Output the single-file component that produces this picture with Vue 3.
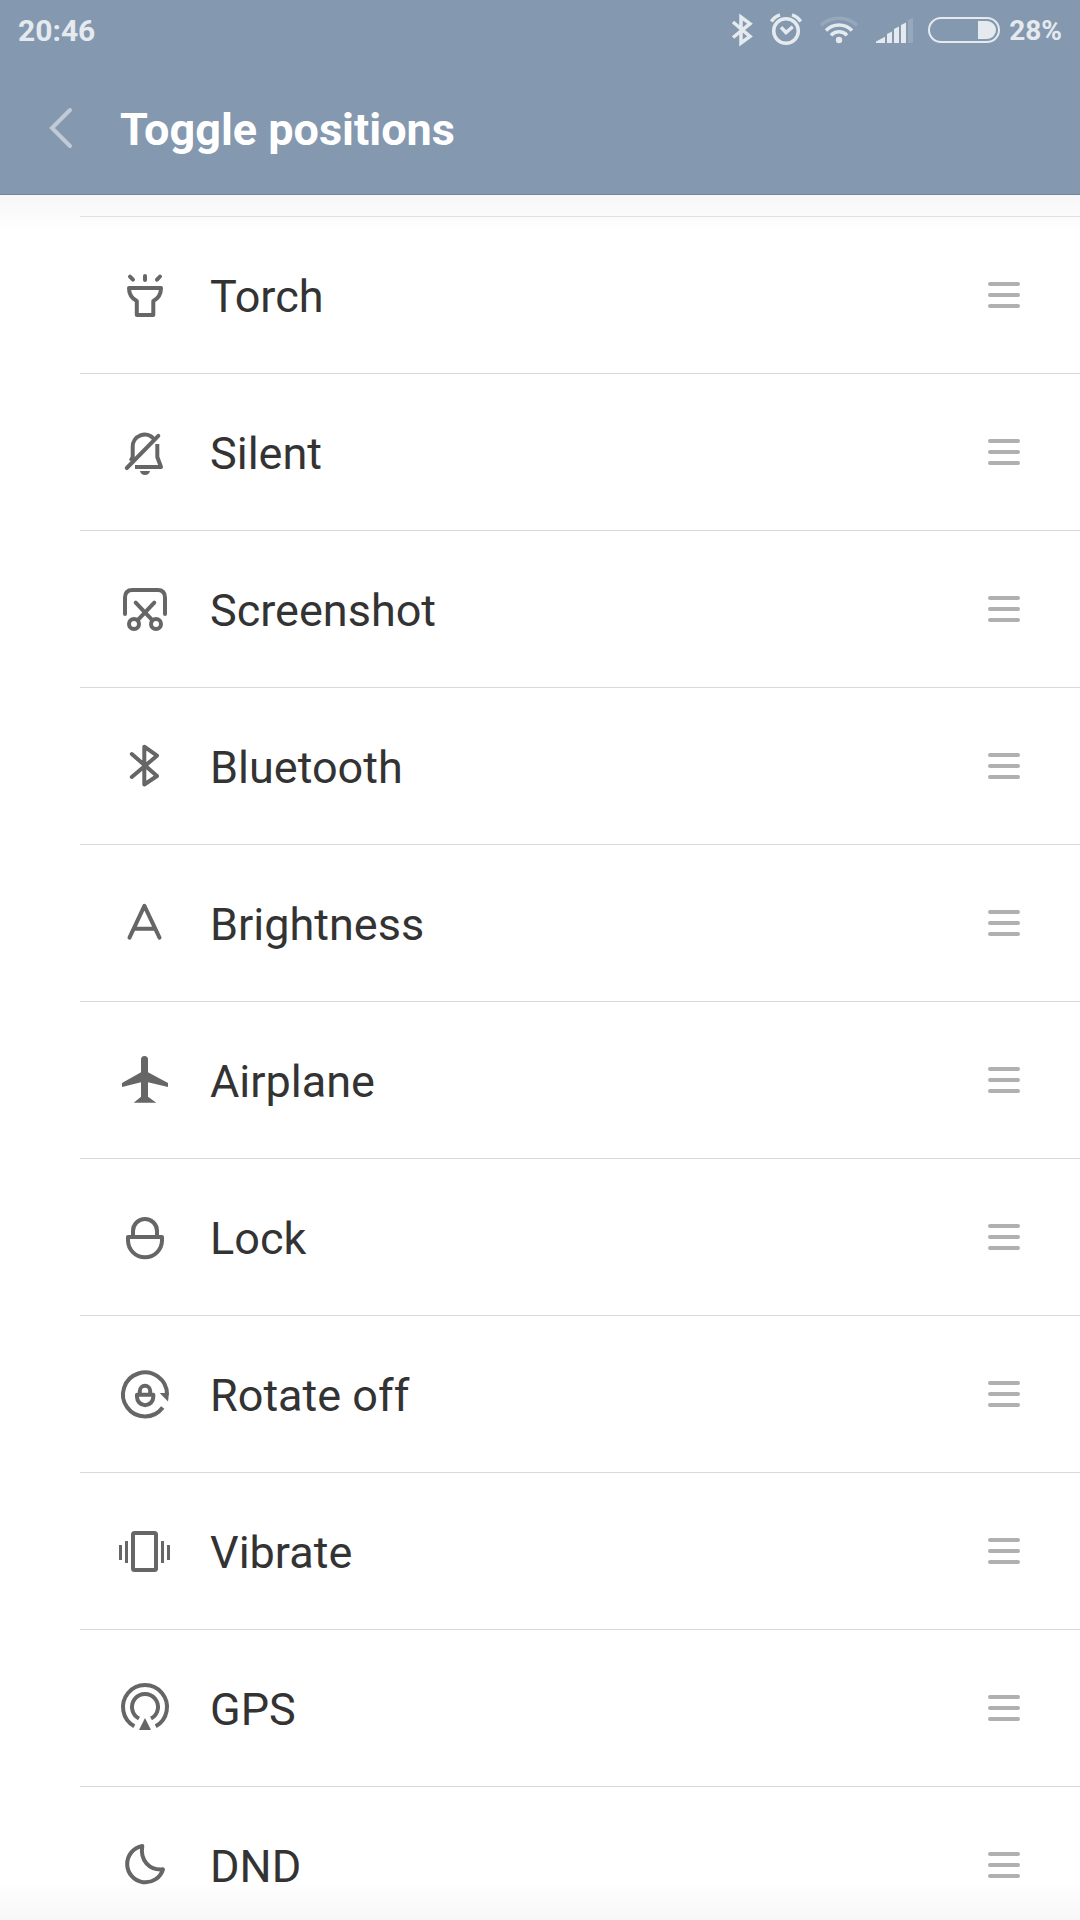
<script setup>
import { ref } from 'vue'

const toggles = ref([
  { id: 'torch', label: 'Torch' },
  { id: 'silent', label: 'Silent' },
  { id: 'screenshot', label: 'Screenshot' },
  { id: 'bluetooth', label: 'Bluetooth' },
  { id: 'brightness', label: 'Brightness' },
  { id: 'airplane', label: 'Airplane' },
  { id: 'lock', label: 'Lock' },
  { id: 'rotate', label: 'Rotate off' },
  { id: 'vibrate', label: 'Vibrate' },
  { id: 'gps', label: 'GPS' },
  { id: 'dnd', label: 'DND' },
])
</script>

<template>
  <div class="screen">
    <header class="header">
      <div class="status">
        <time class="clock">20:46</time>
        <div class="indicators">
          <svg class="bt" width="24" height="36" viewBox="0 0 24 36" aria-hidden="true">
            <path d="M3 10L20 24.3 11 31V5L20 11.7 3 25.5" class="line" />
          </svg>
          <svg class="alarm" width="36" height="36" viewBox="0 0 36 36" aria-hidden="true">
            <circle cx="18" cy="19" r="12.3" class="line" />
            <path d="M13 15.3L18 20.5 24.7 14.7M3.3 9.5Q6.5 4.5 12 2.8M32.7 9.5Q29.5 4.5 24 2.8" class="line" />
          </svg>
          <svg class="wifi" width="40" height="36" viewBox="0 0 40 36" aria-hidden="true">
            <path d="M2 13.3A26.6 26.6 0 0 1 38 13.3" class="line faint" />
            <path d="M7 18.5A18 18 0 0 1 33 18.5M12 23.3A10.7 10.7 0 0 1 28 23.3" class="line" />
            <circle cx="20" cy="28" r="3.2" class="solid" />
          </svg>
          <svg class="signal" width="38" height="36" viewBox="0 0 38 36" aria-hidden="true">
            <path d="M0 31V29.5L9 24.7V31ZM11 31V22L16 19.5V31ZM18 31V17L23 14.6V31ZM25 31V13L30 10.5V31Z" class="solid" />
            <path d="M32 31V8L37 5.7V31Z" class="solid faint" />
          </svg>
          <svg class="battery" width="72" height="26" viewBox="0 0 72 26" aria-hidden="true">
            <rect x="1" y="1" width="70" height="24" rx="12" class="outline" />
            <path d="M50 4H59A9 9 0 0 1 59 22H50Z" class="solid" />
          </svg>
          <span class="percent">28%</span>
        </div>
      </div>
      <div class="title-bar">
        <button class="back" type="button" aria-label="Back">
          <svg width="24" height="44" viewBox="0 0 24 44" aria-hidden="true">
            <path d="M21 4L3 22 21 40" />
          </svg>
        </button>
        <h1>Toggle positions</h1>
      </div>
    </header>

    <main class="body">
      <ul class="list">
        <li v-for="t in toggles" :key="t.id" class="row">
          <svg class="icon" width="64" height="64" viewBox="0 0 64 64" aria-hidden="true">
            <g v-if="t.id === 'torch'">
              <path d="M17 13.7L20 16.7M32 13V17M47 13.5L44 16.7" />
              <path d="M16 25H48C48 31 45 35.5 40.3 38V52H23.8V38C19 35.5 16 31 16 25Z" />
            </g>
            <g v-else-if="t.id === 'silent'">
              <path d="M13.8 48L45.3 15.8" />
              <path d="M17.7 41L19.7 37V27A12 12 0 0 1 41 19" class="butt" />
              <path d="M44.3 24V37L48 47H22" class="butt" />
              <path d="M27 51H37Q36 55 32 55Q28 55 27 51Z" class="fill" />
            </g>
            <g v-else-if="t.id === 'screenshot'">
              <path d="M12 37V20.5Q12 13 19.5 13H44.5Q52 13 52 20.5V37" />
              <circle cx="21" cy="47" r="5" />
              <circle cx="43" cy="47" r="5" />
              <path d="M22.7 25.7L39.5 43.3M41.3 25.7L24.5 43.3" />
            </g>
            <path v-else-if="t.id === 'bluetooth'" d="M18.8 20L44 42 31.3 50.5V12.7L44 21.7 18.8 43" />
            <path v-else-if="t.id === 'brightness'" d="M16.5 46.7L31.4 14.8 46.5 46.7M21 37.7H42" />
            <path
              v-else-if="t.id === 'airplane'"
              class="fill"
              d="M28 11.5A3.5 3.5 0 0 1 35 11.5V24.3L55 35V39L35 34.3V48.7L43.3 54.7H20.7L28 48.7V34.3L9 39V35L28 24.3Z"
            />
            <g v-else-if="t.id === 'lock'">
              <path d="M20 32V26A12 12 0 0 1 44 26V32" />
              <path d="M15 32H49V35.3A17 17 0 0 1 15 35.3Z" />
            </g>
            <g v-else-if="t.id === 'rotate'">
              <path d="M49.7 45.5A22 22 0 1 1 54 32.5" class="butt" />
              <path d="M46.7 31H56L55 39.5Z" class="fill" />
              <path d="M26.8 32.5V29A5.2 5.2 0 0 1 37.2 29V32.5M24 32.7H40.3V35A8.1 8.1 0 0 1 24 35Z" />
            </g>
            <g v-else-if="t.id === 'vibrate'">
              <rect x="20" y="14" width="23" height="37" rx="1.5" />
              <path d="M7.5 26V41M13.5 22V44M49.5 22V44M55.5 26V41" class="thin" />
            </g>
            <g v-else-if="t.id === 'gps'">
              <path d="M21.3 50.2A22 22 0 1 1 42.7 50.2M26 42.5A13 13 0 1 1 38 42.5" class="butt" />
              <path d="M32 42L38 54H26Z" class="fill" />
            </g>
            <path v-else d="M29.3 13A18.3 18.3 0 1 0 50 36.3C36.5 37.5 26.8 27.5 29.3 13Z" />
          </svg>
          <span class="label">{{ t.label }}</span>
          <button class="handle" type="button" :aria-label="'Move ' + t.label">
            <i></i><i></i><i></i>
          </button>
        </li>
      </ul>
    </main>
  </div>
</template>

<style>
body {
  background: #fff;
}
</style>

<style scoped>
.screen {
  display: flex;
  flex-direction: column;
  height: 100vh;
  overflow: hidden;
  font-family: Roboto, sans-serif;
  color: #333;
}

.header {
  flex: none;
  background: #8498b0;
  border-bottom: 1px solid #7386a0;
}

.status {
  display: flex;
  align-items: center;
  justify-content: space-between;
  height: 60px;
  padding: 0 18px;
  color: #e4eaee;
  font-size: 30px;
  font-weight: 700;
}

.indicators {
  display: flex;
  align-items: center;
}

.alarm { margin-left: 14px; }
.wifi { margin-left: 15px; }
.signal { margin-left: 17px; }
.battery { margin-left: 14px; }

.percent {
  margin-left: 9px;
  font-size: 28px;
}

.line,
.outline {
  fill: none;
  stroke: #e4eaee;
  stroke-width: 3.5;
}

.outline { stroke-width: 2; }
.solid { fill: #e4eaee; }
.faint { opacity: 0.2; }

.title-bar {
  display: flex;
  align-items: center;
  height: 132px;
  padding-top: 2px;
}

.back {
  display: flex;
  align-items: center;
  padding: 0 47px 0 49px;
  border: 0;
  background: none;
}

.back path {
  fill: none;
  stroke: #c0cbd7;
  stroke-width: 4;
  stroke-linecap: round;
}

h1 {
  margin: 0;
  padding-top: 2px;
  color: #fff;
  font-size: 45px;
  font-weight: 700;
}

.body {
  position: relative;
  flex: 1;
  min-height: 0;
  display: flex;
  flex-direction: column;
}

.body::before,
.body::after {
  content: '';
  position: absolute;
  left: 0;
  right: 0;
  height: 40px;
  pointer-events: none;
}

.body::before {
  top: 0;
  background: linear-gradient(rgba(0, 0, 0, 0.03), transparent);
}

.body::after {
  bottom: 0;
  background: linear-gradient(transparent, rgba(0, 0, 0, 0.03));
}

.list {
  flex: 1;
  min-height: 0;
  margin: 0;
  padding: 21px 0 0 80px;
  overflow-y: auto;
  scrollbar-width: none;
  list-style: none;
}

.row {
  display: flex;
  align-items: center;
  height: 156px;
  padding: 0 60px 0 33px;
  border-top: 1px solid #d9d9d9;
}

.row:first-child {
  border-top-color: #e4e4e4;
}

.icon {
  flex: none;
  fill: none;
  stroke: #666;
  stroke-width: 4;
  stroke-linecap: round;
  stroke-linejoin: round;
}

.icon .butt { stroke-linecap: butt; }

.icon .thin {
  stroke-width: 3;
  stroke-linecap: butt;
}

.icon .fill {
  fill: #666;
  stroke: none;
}

.label {
  flex: 1;
  margin-left: 33px;
  padding-top: 2px;
  font-size: 45px;
}

.handle {
  display: flex;
  flex-direction: column;
  gap: 7px;
  width: 32px;
  padding: 0;
  border: 0;
  background: none;
}

.handle i {
  width: 100%;
  height: 4px;
  border-radius: 2px;
  background: #b0b0b0;
}
</style>
